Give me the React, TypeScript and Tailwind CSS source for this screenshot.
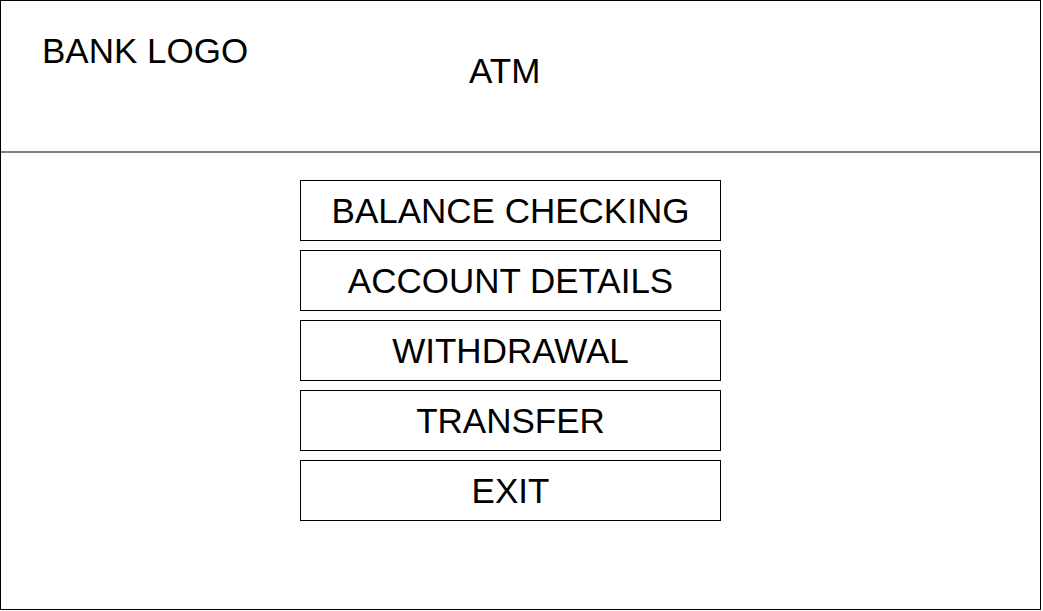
const menuItems = ['BALANCE CHECKING', 'ACCOUNT DETAILS', 'WITHDRAWAL', 'TRANSFER', 'EXIT'];

const App = () => {
  return (
    <div
      className="bg-white w-[1043px] h-[611px] text-black"
      style={{ fontFamily: '"Liberation Sans", Arial, sans-serif' }}
    >
      <div className="w-[1041px] h-[610px] border border-black flex flex-col">
        <header className="h-[152px] border-b-2 border-[#808080] flex items-start px-[41px]">
          <div className="w-[427px] pt-[32px] text-[35px] leading-none">BANK LOGO</div>
          <div className="pt-[52px] text-[35px] leading-none">ATM</div>
        </header>

        <main className="flex flex-col gap-[9px] pt-[27px] pl-[299px]">
          {menuItems.map((item) => (
            <button
              key={item}
              className="w-[421px] h-[61px] border border-black flex items-center justify-center text-[35px] leading-none"
            >
              {item}
            </button>
          ))}
        </main>
      </div>
    </div>
  );
};

export default App;
